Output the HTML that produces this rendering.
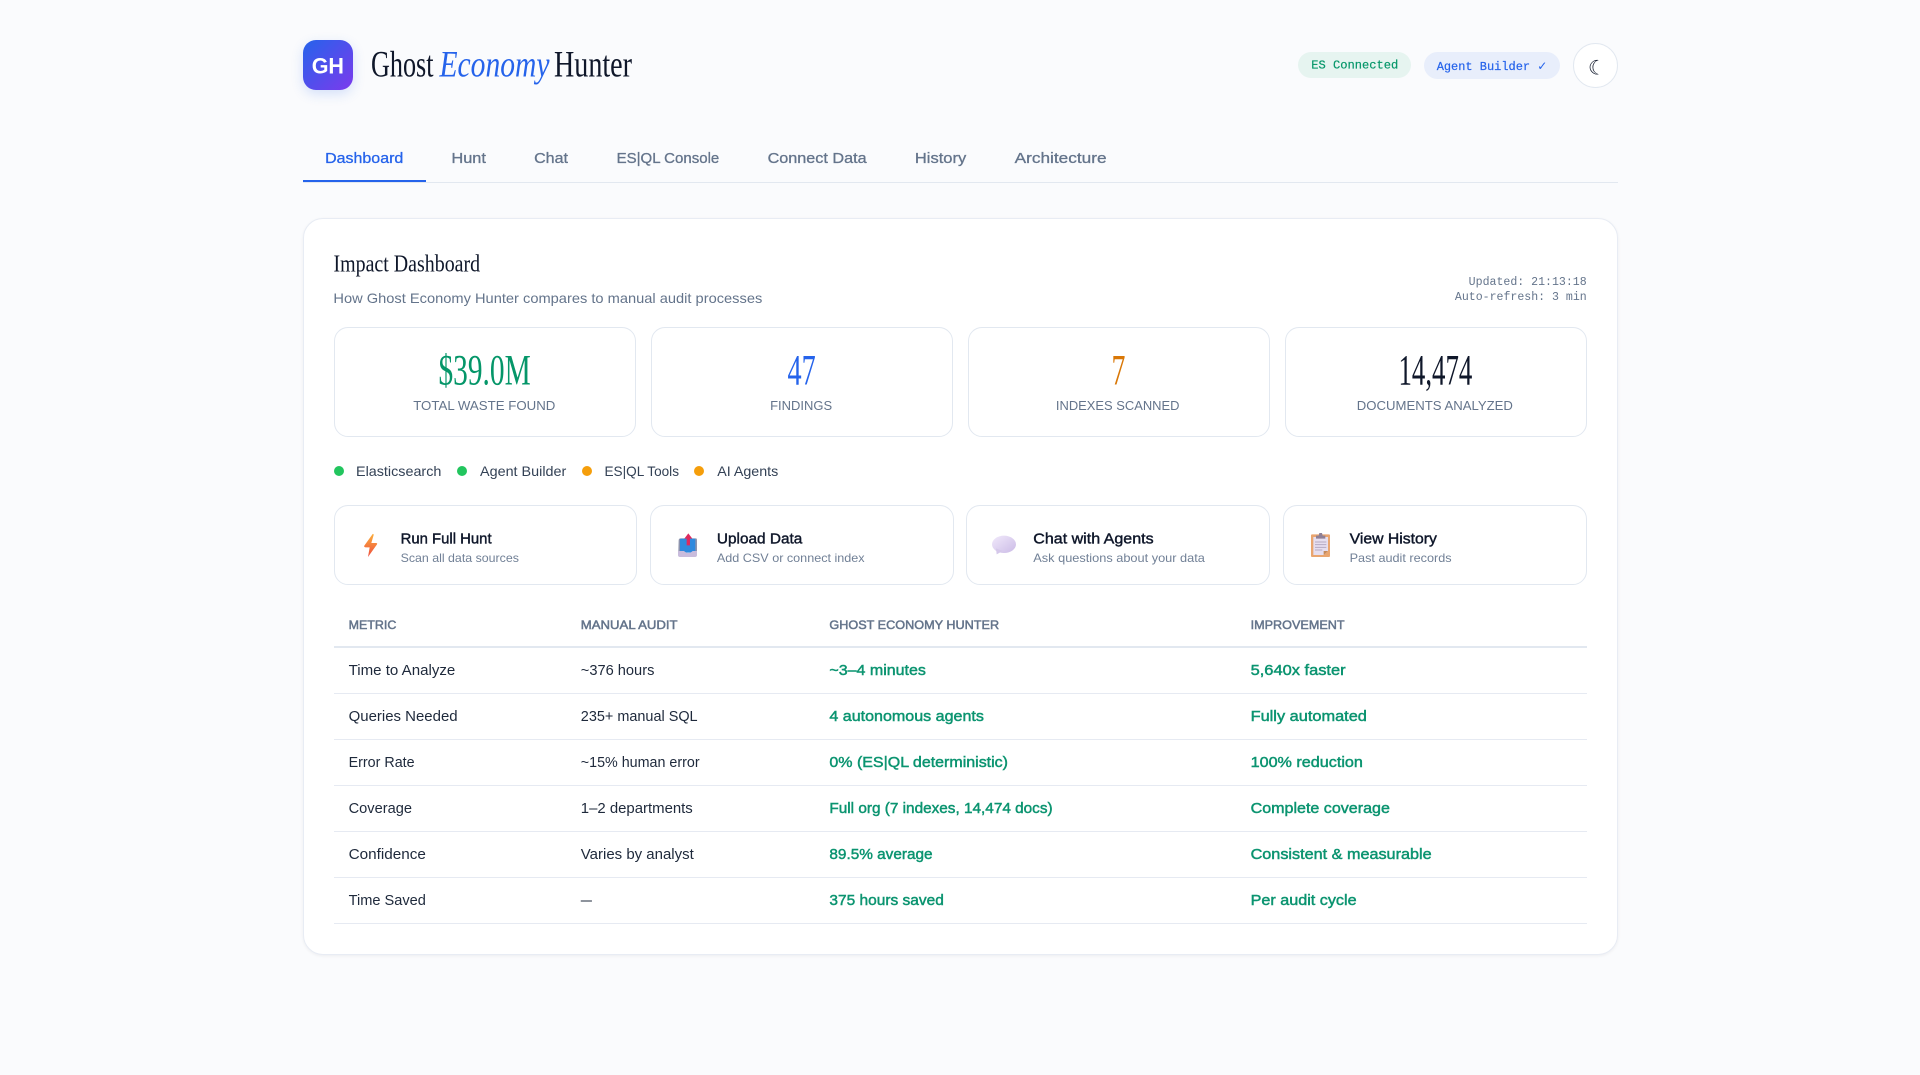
<!DOCTYPE html>
<html lang="en">
<head>
<meta charset="utf-8">
<title>Ghost Economy Hunter</title>
<style>
html,body{margin:0;padding:0;width:1920px;height:1075px;overflow:hidden;background:#fafbfd}
.b{position:absolute;box-sizing:border-box;background:#fff;border:1px solid #e2e8f0}
.logo{position:absolute;left:303px;top:40px;width:50px;height:50px;border-radius:13px;background:linear-gradient(135deg,#2563eb,#7c3aed);box-shadow:0 4px 12px rgba(37,99,235,.18)}
.pill{position:absolute;border-radius:14px}
.rule{position:absolute;left:334px;width:1253px;height:1px;background:#e6eaf2}
.dot{position:absolute;width:10px;height:10px;border-radius:50%;top:466px}
svg{position:absolute;left:0;top:0}
text{white-space:pre}
.s{font-family:"Liberation Sans",sans-serif}
.f{font-family:"Liberation Serif",serif}
.m{font-family:"Liberation Mono",monospace}
.tab{font-size:14.8px;fill:#64748b;stroke:#64748b;stroke-width:.3px}
.th{font-size:12px;fill:#64748b;stroke:#64748b;stroke-width:.48px}
.td{font-size:14.4px;fill:#1e293b}
.g{font-size:14.4px;fill:#0b9470;stroke:#0b9470;stroke-width:.45px}
.v{font-size:43px}
.l{font-size:12.6px;fill:#64748b}
.lg{font-size:13.6px;fill:#334155}
.at{font-size:14.4px;fill:#0f172a;stroke:#0f172a;stroke-width:.4px}
.as{font-size:12px;fill:#718096}
</style>
</head>
<body>
<div class="logo"></div>
<div class="pill" style="left:1298px;top:52px;width:113px;height:26px;background:#e6f4f0"></div>
<div class="pill" style="left:1424px;top:52px;width:136px;height:27px;background:#e8eefb"></div>
<div class="b" style="left:1573px;top:43px;width:45px;height:45px;border-radius:50%"></div>
<div style="position:absolute;left:303px;top:182px;width:1315px;height:1px;background:#e2e8f0"></div>
<div style="position:absolute;left:303px;top:180px;width:123px;height:2px;background:#2563eb"></div>

<div class="b" style="left:303px;top:218px;width:1314.5px;height:737px;border-radius:20px;border-color:#e8ecf4;box-shadow:0 1px 3px rgba(15,23,42,.06)"></div>

<div class="b" style="left:334px;top:327px;width:302px;height:110px;border-radius:14px"></div>
<div class="b" style="left:651px;top:327px;width:302px;height:110px;border-radius:14px"></div>
<div class="b" style="left:968px;top:327px;width:302px;height:110px;border-radius:14px"></div>
<div class="b" style="left:1285px;top:327px;width:302px;height:110px;border-radius:14px"></div>

<div class="dot" style="left:334px;background:#22c55e"></div>
<div class="dot" style="left:457px;background:#22c55e"></div>
<div class="dot" style="left:582px;background:#f59e0b"></div>
<div class="dot" style="left:694px;background:#f59e0b"></div>

<div class="b" style="left:334px;top:505px;width:303px;height:80px;border-radius:14px"></div>
<div class="b" style="left:650.4px;top:505px;width:303.6px;height:80px;border-radius:14px"></div>
<div class="b" style="left:966px;top:505px;width:304px;height:80px;border-radius:14px"></div>
<div class="b" style="left:1283.3px;top:505px;width:303.6px;height:80px;border-radius:14px"></div>

<div class="rule" style="top:646px;height:2px;background:#e2e8f0"></div>
<div class="rule" style="top:693px"></div>
<div class="rule" style="top:739px"></div>
<div class="rule" style="top:785px"></div>
<div class="rule" style="top:831px"></div>
<div class="rule" style="top:877px"></div>
<div class="rule" style="top:923px"></div>

<svg width="1920" height="1075" viewBox="0 0 1920 1075" xmlns="http://www.w3.org/2000/svg">
<defs>
<linearGradient id="bolt" x1="0" y1="0" x2="0" y2="1"><stop offset="0" stop-color="#fbae3c"/><stop offset="1" stop-color="#ee4e3f"/></linearGradient>
<linearGradient id="bub" x1="0" y1="0" x2="1" y2="1"><stop offset="0" stop-color="#f1e9fb"/><stop offset="1" stop-color="#cbbbe6"/></linearGradient>
</defs>

<text class="s" x="311.7" y="73.3" font-size="22" font-weight="700" fill="#fff" textLength="32.3" lengthAdjust="spacingAndGlyphs">GH</text>

<g class="f" font-size="36.7" fill="#0f172a" transform="translate(-.5 0)">
<text x="371.5" y="76.7" textLength="62.5" lengthAdjust="spacingAndGlyphs">Ghost</text>
<text x="440" y="76.7" font-style="italic" fill="#2563eb" textLength="110" lengthAdjust="spacingAndGlyphs">Economy</text>
<text x="554.5" y="76.7" textLength="78" lengthAdjust="spacingAndGlyphs">Hunter</text>
</g>

<g class="m" font-size="12" stroke-width=".2">
<text x="1311.3" y="68.6" fill="#059669" stroke="#059669" textLength="87" lengthAdjust="spacingAndGlyphs">ES Connected</text>
<text x="1436.7" y="69.8" fill="#2563eb" stroke="#2563eb" textLength="110.6" lengthAdjust="spacingAndGlyphs">Agent Builder <tspan font-family="'DejaVu Sans',sans-serif" stroke="none">✓</tspan></text>
</g>
<text x="1597" y="74.5" text-anchor="middle" font-family="'DejaVu Sans',sans-serif" font-size="20" fill="#0f172a">☾</text>

<g class="s" transform="translate(-.4 0)">
<text class="tab" x="325.5" y="163" style="fill:#2563eb;stroke:#2563eb" textLength="78.2" lengthAdjust="spacingAndGlyphs">Dashboard</text>
<text class="tab" x="451.9" y="163" textLength="34.4" lengthAdjust="spacingAndGlyphs">Hunt</text>
<text class="tab" x="534.5" y="163" textLength="33.9" lengthAdjust="spacingAndGlyphs">Chat</text>
<text class="tab" x="617" y="163" textLength="102.7" lengthAdjust="spacingAndGlyphs">ES|QL Console</text>
<text class="tab" x="768" y="163" textLength="99" lengthAdjust="spacingAndGlyphs">Connect Data</text>
<text class="tab" x="915.3" y="163" textLength="51.3" lengthAdjust="spacingAndGlyphs">History</text>
<text class="tab" x="1015" y="163" textLength="92" lengthAdjust="spacingAndGlyphs">Architecture</text>
</g>

<text class="f" x="333.5" y="271.7" font-size="24.5" fill="#0f172a" textLength="146.6" lengthAdjust="spacingAndGlyphs">Impact Dashboard</text>
<text class="s" x="333.4" y="303.2" font-size="13.8" fill="#64748b" textLength="428.9" lengthAdjust="spacingAndGlyphs">How Ghost Economy Hunter compares to manual audit processes</text>
<g class="m" font-size="11.5" fill="#64748b" transform="translate(.5 0)">
<text x="1468.2" y="285" textLength="118" lengthAdjust="spacingAndGlyphs">Updated: 21:13:18</text>
<text x="1454.4" y="300" textLength="131.8" lengthAdjust="spacingAndGlyphs">Auto-refresh: 3 min</text>
</g>

<g class="f" transform="translate(-.3 0)">
<text class="v" x="438.8" y="384.3" fill="#059669" textLength="92.2" lengthAdjust="spacingAndGlyphs">$39.0M</text>
<text class="v" x="787.8" y="384.3" fill="#2563eb" textLength="28.2" lengthAdjust="spacingAndGlyphs">47</text>
<text class="v" x="1111.8" y="384.3" fill="#d97706" textLength="13.9" lengthAdjust="spacingAndGlyphs">7</text>
<text class="v" x="1398.8" y="384.3" fill="#0f172a" textLength="73.8" lengthAdjust="spacingAndGlyphs">14,474</text>
</g>
<g class="s" transform="translate(-.4 0)">
<text class="l" x="413.6" y="410" textLength="142.2" lengthAdjust="spacingAndGlyphs">TOTAL WASTE FOUND</text>
<text class="l" x="770.5" y="410" textLength="62" lengthAdjust="spacingAndGlyphs">FINDINGS</text>
<text class="l" x="1056.3" y="410" textLength="123.6" lengthAdjust="spacingAndGlyphs">INDEXES SCANNED</text>
<text class="l" x="1357.2" y="410" textLength="156.1" lengthAdjust="spacingAndGlyphs">DOCUMENTS ANALYZED</text>

<text class="lg" x="356.4" y="476" textLength="85.4" lengthAdjust="spacingAndGlyphs">Elasticsearch</text>
<text class="lg" x="480.4" y="476" textLength="86.3" lengthAdjust="spacingAndGlyphs">Agent Builder</text>
<text class="lg" x="604.9" y="476" textLength="74.5" lengthAdjust="spacingAndGlyphs">ES|QL Tools</text>
<text class="lg" x="717.6" y="476" textLength="61.1" lengthAdjust="spacingAndGlyphs">AI Agents</text>

<text class="at" x="401" y="543.3" textLength="91" lengthAdjust="spacingAndGlyphs">Run Full Hunt</text>
<text class="as" x="401" y="562" textLength="118.3" lengthAdjust="spacingAndGlyphs">Scan all data sources</text>
<text class="at" x="717.3" y="543.3" textLength="85.4" lengthAdjust="spacingAndGlyphs">Upload Data</text>
<text class="as" x="717.3" y="562" textLength="147.7" lengthAdjust="spacingAndGlyphs">Add CSV or connect index</text>
<text class="at" x="1033.7" y="543.3" textLength="120.3" lengthAdjust="spacingAndGlyphs">Chat with Agents</text>
<text class="as" x="1033.7" y="562" textLength="171.6" lengthAdjust="spacingAndGlyphs">Ask questions about your data</text>
<text class="at" x="1350" y="543.3" textLength="87.3" lengthAdjust="spacingAndGlyphs">View History</text>
<text class="as" x="1350" y="562" textLength="102" lengthAdjust="spacingAndGlyphs">Past audit records</text>

<text class="th" x="349" y="629" textLength="47.8" lengthAdjust="spacingAndGlyphs">METRIC</text>
<text class="th" x="581.2" y="629" textLength="96.8" lengthAdjust="spacingAndGlyphs">MANUAL AUDIT</text>
<text class="th" x="829.8" y="629" textLength="169.7" lengthAdjust="spacingAndGlyphs">GHOST ECONOMY HUNTER</text>
<text class="th" x="1251" y="629" textLength="94" lengthAdjust="spacingAndGlyphs">IMPROVEMENT</text>

<text class="td" x="349" y="675" textLength="106.7" lengthAdjust="spacingAndGlyphs">Time to Analyze</text>
<text class="td" x="581.2" y="675" textLength="73.6" lengthAdjust="spacingAndGlyphs">~376 hours</text>
<text class="g" x="829.8" y="675" textLength="96.5" lengthAdjust="spacingAndGlyphs">~3–4 minutes</text>
<text class="g" x="1251" y="675" textLength="95" lengthAdjust="spacingAndGlyphs">5,640x faster</text>

<text class="td" x="349" y="721" textLength="109" lengthAdjust="spacingAndGlyphs">Queries Needed</text>
<text class="td" x="581.2" y="721" textLength="116.8" lengthAdjust="spacingAndGlyphs">235+ manual SQL</text>
<text class="g" x="829.8" y="721" textLength="154.5" lengthAdjust="spacingAndGlyphs">4 autonomous agents</text>
<text class="g" x="1251" y="721" textLength="116.3" lengthAdjust="spacingAndGlyphs">Fully automated</text>

<text class="td" x="349" y="767" textLength="66" lengthAdjust="spacingAndGlyphs">Error Rate</text>
<text class="td" x="581.2" y="767" textLength="118.8" lengthAdjust="spacingAndGlyphs">~15% human error</text>
<text class="g" x="829.8" y="767" textLength="178.6" lengthAdjust="spacingAndGlyphs">0% (ES|QL deterministic)</text>
<text class="g" x="1251" y="767" textLength="112.3" lengthAdjust="spacingAndGlyphs">100% reduction</text>

<text class="td" x="349" y="813" textLength="63.4" lengthAdjust="spacingAndGlyphs">Coverage</text>
<text class="td" x="581.2" y="813" textLength="112" lengthAdjust="spacingAndGlyphs">1–2 departments</text>
<text class="g" x="829.8" y="813" textLength="223.2" lengthAdjust="spacingAndGlyphs">Full org (7 indexes, 14,474 docs)</text>
<text class="g" x="1251" y="813" textLength="139.3" lengthAdjust="spacingAndGlyphs">Complete coverage</text>

<text class="td" x="349" y="859" textLength="77.3" lengthAdjust="spacingAndGlyphs">Confidence</text>
<text class="td" x="581.2" y="859" textLength="113" lengthAdjust="spacingAndGlyphs">Varies by analyst</text>
<text class="g" x="829.8" y="859" textLength="103.2" lengthAdjust="spacingAndGlyphs">89.5% average</text>
<text class="g" x="1251" y="859" textLength="181" lengthAdjust="spacingAndGlyphs">Consistent &amp; measurable</text>

<text class="td" x="349" y="905" textLength="77.3" lengthAdjust="spacingAndGlyphs">Time Saved</text>
<text class="td" x="581.2" y="905" textLength="11.2" lengthAdjust="spacingAndGlyphs">—</text>
<text class="g" x="829.8" y="905" textLength="114.4" lengthAdjust="spacingAndGlyphs">375 hours saved</text>
<text class="g" x="1251" y="905" textLength="106" lengthAdjust="spacingAndGlyphs">Per audit cycle</text>
</g>

<!-- Run Full Hunt: lightning bolt -->
<g transform="translate(320 495) scale(.3333)">
<path d="M158 117 L133 152 Q131 157 137 157 L149 157 L144 186 L171 148 Q173 144 168 144 L154 144 L161 120 Q161 116 158 117Z" fill="url(#bolt)"/>
</g>
<!-- Upload Data: tray with arrow -->
<g transform="translate(640 495) scale(.3333)">
<path d="M116 136 Q116 130 122 130 L168 130 Q171 130 171 136 L171 170 L115 170Z" fill="#8d93ad"/>
<rect x="120" y="131" width="46" height="42" rx="3" fill="#2f8ade"/>
<path d="M114 168 L132 168 Q145 180 158 168 L171 168 L171 180 Q171 186 165 186 L120 186 Q114 186 114 180Z" fill="#c9bcdc"/>
<path d="M145 115 L157 131 L150 131 L150 151 L140 151 L140 131 L133 131Z" fill="#dd2a5e"/>
</g>
<!-- Chat with Agents: speech bubble -->
<g transform="translate(960 495) scale(.3333)">
<ellipse cx="132" cy="148" rx="36" ry="26" fill="url(#bub)"/>
<path d="M108 160 L110 178 L128 168Z" fill="#d5c8ea"/>
</g>
<!-- View History: clipboard -->
<g transform="translate(1280 495) scale(.3333)">
<rect x="93" y="118" width="57" height="68" rx="3" fill="#e9a56f"/>
<path d="M100 126 L144 126 L144 168 L131 180 L100 180Z" fill="#e6deef"/>
<path d="M131 180 L144 168 L131 168Z" fill="#c48a5c"/>
<path d="M108 122 L116 122 L118 114 L126 114 L128 122 L136 122 L136 131 L108 131Z" fill="#8f8096"/>
<path d="M105 141 H139 M105 149 H139 M105 157 H139 M105 165 H127" stroke="#b5a9c2" stroke-width="3" fill="none"/>
</g>
</svg>
</body>
</html>
